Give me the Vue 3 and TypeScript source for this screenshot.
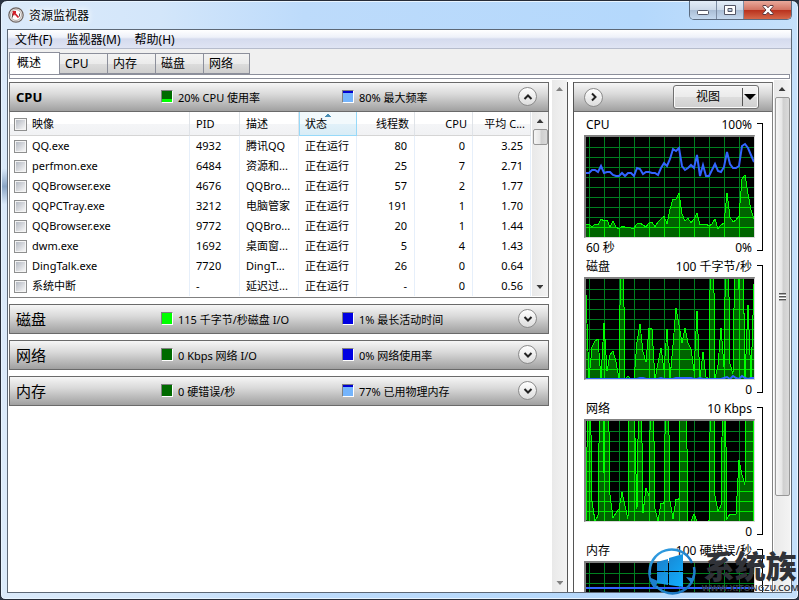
<script setup lang="ts">
import { ref } from 'vue'

interface Proc {
  name: string
  pid: string
  desc: string
  threads: string
  cpu: string
  avg: string
}

interface Section {
  title: string
  leftIcon: string
  left: string
  rightIcon: string
  right: string
}

interface Chart {
  id: string
  title: string
  max: string
  span: string
  min: string
  area: number[]
  line: number[]
}

const menus = ['文件(F)', '监视器(M)', '帮助(H)']
const tabs = ['概述', 'CPU', '内存', '磁盘', '网络']
const activeTab = ref('概述')

const procs: Proc[] = [
  { name: 'QQ.exe', pid: '4932', desc: '腾讯QQ', threads: '80', cpu: '0', avg: '3.25' },
  { name: 'perfmon.exe', pid: '6484', desc: '资源和...', threads: '25', cpu: '7', avg: '2.71' },
  { name: 'QQBrowser.exe', pid: '4676', desc: 'QQBro...', threads: '57', cpu: '2', avg: '1.77' },
  { name: 'QQPCTray.exe', pid: '3212', desc: '电脑管家', threads: '191', cpu: '1', avg: '1.70' },
  { name: 'QQBrowser.exe', pid: '9772', desc: 'QQBro...', threads: '20', cpu: '1', avg: '1.44' },
  { name: 'dwm.exe', pid: '1692', desc: '桌面窗...', threads: '5', cpu: '4', avg: '1.43' },
  { name: 'DingTalk.exe', pid: '7720', desc: 'DingT...', threads: '26', cpu: '0', avg: '0.64' },
  { name: '系统中断', pid: '-', desc: '延迟过...', threads: '-', cpu: '0', avg: '0.56' },
]

const sections: Section[] = [
  { title: 'CPU', leftIcon: 'green-low', left: '20% CPU 使用率', rightIcon: 'blue-high', right: '80% 最大频率' },
  { title: '磁盘', leftIcon: 'green-full', left: '115 千字节/秒磁盘 I/O', rightIcon: 'blue-empty', right: '1% 最长活动时间' },
  { title: '网络', leftIcon: 'green-empty', left: '0 Kbps 网络 I/O', rightIcon: 'blue-empty', right: '0% 网络使用率' },
  { title: '内存', leftIcon: 'green-empty', left: '0 硬错误/秒', rightIcon: 'blue-high', right: '77% 已用物理内存' },
]

const charts: Chart[] = [
  {
    id: 'cpu', title: 'CPU', max: '100%', span: '60 秒', min: '0%',
    area: [13, 13, 10, 13, 12, 18, 16, 17, 10, 16, 10, 8, 11, 10, 10, 9, 9, 13, 14, 12, 10, 14, 15, 10, 15, 18, 21, 13, 28, 38, 38, 44, 23, 16, 19, 14, 18, 24, 12, 13, 13, 11, 13, 18, 8, 12, 14, 44, 20, 15, 17, 21, 58, 62, 43, 27, 18],
    line: [64, 64, 67, 67, 65, 71, 64, 65, 65, 62, 61, 61, 64, 61, 64, 64, 61, 69, 68, 63, 65, 65, 64, 64, 62, 69, 74, 71, 78, 88, 86, 89, 71, 67, 69, 72, 69, 82, 61, 72, 61, 61, 67, 73, 66, 65, 70, 85, 73, 69, 69, 71, 91, 93, 89, 82, 75],
  },
  {
    id: 'disk', title: '磁盘', max: '100 千字节/秒', span: '', min: '0',
    area: [84, 0, 32, 38, 40, 0, 56, 8, 24, 28, 17, 0, 220, 0, 3, 0, 0, 37, 55, 27, 17, 51, 50, 0, 16, 31, 9, 50, 0, 34, 71, 54, 36, 51, 36, 30, 8, 68, 0, 27, 2, 0, 260, 0, 14, 51, 12, 220, 15, 5, 200, 90, 200, 0, 74, 0, 95],
    line: [0, 0, 0, 0, 0, 0, 0, 0, 0, 0, 0, 0, 0, 0, 0, 0, 0, 0, 1, 1, 0, 0, 0, 0, 0, 1, 0, 0, 0, 0, 1, 1, 1, 1, 1, 1, 0, 0, 1, 0, 0, 0, 0, 0, 0, 0, 1, 2, 0, 3, 1, 0, 3, 1, 0, 1, 1],
  },
  {
    id: 'net', title: '网络', max: '10 Kbps', span: '', min: '0',
    area: [0, 220, 20, 0, 5, 220, 48, 220, 26, 3, 8, 12, 29, 15, 2, 400, 120, 12, 220, 8, 33, 25, 220, 12, 0, 18, 18, 220, 20, 2, 22, 22, 400, 220, 0, 0, 7, 0, 0, 0, 0, 0, 260, 25, 10, 15, 220, 2, 7, 7, 7, 61, 46, 36, 400, 400, 0],
    line: [],
  },
  {
    id: 'mem', title: '内存', max: '100 硬错误/秒', span: '', min: '0',
    area: [],
    line: Array.from({ length: 57 }, () => 75),
  },
]

const linePoints = (v: number[]): string => v.map((y, i) => `${i * 3},${100 - y}`).join(' ')
const areaPoints = (v: number[]): string => `-2,102 ${linePoints(v)} 170,102`
const vLines = Array.from({ length: 12 }, (_, i) => 3 + i * 15)
const hLines = Array.from({ length: 9 }, (_, i) => 10 + i * 10)
const gridPath = [...vLines.map((x) => `M${x}.5 0V101`), ...hLines.map((y) => `M0 ${y}.5H169`)].join('')
</script>

<template>
  <div class="window">
    <header class="titlebar">
      <svg class="app-icon" viewBox="0 0 16 16" aria-hidden="true">
        <circle cx="8" cy="8" r="7.2" fill="#e9e6e4" stroke="#6c6360" stroke-width="1.2" />
        <circle cx="8" cy="8" r="5.4" fill="#fff" stroke="#a39c99" stroke-width=".8" />
        <path d="M4.500 10.500V6.500M11.500 9.500V6.500" stroke="#555" stroke-width="1" />
        <path d="M5.500 5l5 5.500M5.500 8.500V5h2.500" stroke="#d2202a" stroke-width="1.800" fill="none" />
      </svg>
      <h1>资源监视器</h1>
      <div class="caption-buttons">
        <button type="button" aria-label="最小化">
          <svg width="14" height="12"><rect x="1.5" y="6.5" width="11" height="4" rx="1" fill="#fff" stroke="#535666" /></svg>
        </button>
        <button type="button" aria-label="最大化">
          <svg width="14" height="12"><path d="M1.500 1.500h11v9h-11zM5 4.500h4v3h-4z" fill="#fff" fill-rule="evenodd" stroke="#535666" /></svg>
        </button>
        <button type="button" class="close" aria-label="关闭">
          <svg width="14" height="12" viewBox="0 0 14 12">
            <path d="M2 1.500h3l2 2.300 2-2.300h3v1.200L9 6l3 3.300v1.200H9L7 8.200 5 10.500H2V9.300L5 6 2 2.700z" fill="#fff" stroke="#5b3b41" />
          </svg>
        </button>
      </div>
    </header>

    <div class="client">
      <nav class="menubar">
        <button v-for="m in menus" :key="m" type="button">{{ m }}</button>
      </nav>
      <div class="tabs" role="tablist">
        <button
          v-for="t in tabs" :key="t" type="button" role="tab"
          :aria-selected="t === activeTab" :class="{ active: t === activeTab }" @click="activeTab = t"
        >{{ t }}</button>
      </div>
      <div class="tab-edge"></div>

      <main class="panes">
        <div class="left">
          <section v-for="(s, i) in sections" :key="s.title" class="section">
            <div class="bar">
              <h2 :class="{ latin: i === 0 }">{{ s.title }}</h2>
              <span class="stat"><i class="meter" :class="s.leftIcon"></i>{{ s.left }}</span>
              <span class="stat"><i class="meter" :class="s.rightIcon"></i>{{ s.right }}</span>
              <button type="button" class="round" :aria-label="s.title">
                <svg width="12" height="12" viewBox="0 0 12 12">
                  <path :d="i === 0 ? 'M2.500 8L6 4.500 9.500 8' : 'M2.500 4L6 7.500 9.500 4'" />
                </svg>
              </button>
            </div>
            <div v-if="i === 0" class="grid-body">
              <table>
                <colgroup>
                  <col />
                  <col class="c-pid" />
                  <col class="c-desc" />
                  <col class="c-num" /><col class="c-num" /><col class="c-num" /><col class="c-num" />
                </colgroup>
                <thead>
                  <tr>
                    <th><label><input type="checkbox" />映像</label></th>
                    <th>PID</th>
                    <th>描述</th>
                    <th class="sorted">状态</th>
                    <th class="num">线程数</th>
                    <th class="num">CPU</th>
                    <th class="num">平均 C...</th>
                  </tr>
                </thead>
                <tbody>
                  <tr v-for="p in procs" :key="p.pid">
                    <td><label><input type="checkbox" />{{ p.name }}</label></td>
                    <td>{{ p.pid }}</td>
                    <td>{{ p.desc }}</td>
                    <td>正在运行</td>
                    <td class="num">{{ p.threads }}</td>
                    <td class="num">{{ p.cpu }}</td>
                    <td class="num">{{ p.avg }}</td>
                  </tr>
                </tbody>
              </table>
              <div class="scroll">
                <i class="arrow up"></i>
                <i class="thumb small"></i>
                <i class="arrow down"></i>
              </div>
            </div>
          </section>
        </div>
        <div class="scroll wide dim"><i class="arrow up"></i><i class="arrow down"></i></div>
        <div class="splitter"></div>

        <aside class="right">
          <div class="bar chart-bar">
            <button type="button" class="round" aria-label="隐藏图表">
              <svg width="12" height="12" viewBox="0 0 12 12"><path d="M4 2.500L7.500 6 4 9.500" /></svg>
            </button>
            <div class="view">
              <button type="button" class="view-main">视图</button>
              <button type="button" class="view-drop" aria-label="视图选项">
                <svg width="12" height="6"><path d="M0 0h12L6 6z" /></svg>
              </button>
            </div>
          </div>
          <div class="charts">
            <figure v-for="c in charts" :key="c.id">
              <div class="plot">
                <div class="cap"><span>{{ c.title }}</span><span>{{ c.max }}</span></div>
                <svg class="graph" viewBox="0 0 168 100" preserveAspectRatio="none">
                  <defs>
                    <clipPath :id="'clip-' + c.id"><polygon :points="areaPoints(c.area)" /></clipPath>
                  </defs>
                  <path :d="gridPath" class="grid" />
                  <template v-if="c.area.length">
                    <polygon :points="areaPoints(c.area)" class="area" />
                    <path :d="gridPath" class="grid lit" :clip-path="`url(#clip-${c.id})`" />
                    <polyline :points="linePoints(c.area)" class="edge" />
                  </template>
                  <polyline v-if="c.line.length" :points="linePoints(c.line)" class="trend" />
                </svg>
                <div class="foot"><span>{{ c.span }}</span><span>{{ c.min }}</span></div>
              </div>
              <div class="bracket"></div>
            </figure>
          </div>
        </aside>
        <div class="scroll outer">
          <i class="arrow up"></i>
          <i class="thumb tall"><b></b></i>
        </div>
      </main>
    </div>

    <div class="watermark">
      <svg class="mark" viewBox="0 0 50 52" aria-hidden="true">
        <defs>
          <linearGradient id="ring" x1="0" y1="0" x2="1" y2="1">
            <stop offset="0" stop-color="#35a5e8" />
            <stop offset="1" stop-color="#1268b5" />
          </linearGradient>
          <linearGradient id="flag" x1="0" y1="0" x2="1" y2="1">
            <stop offset="0" stop-color="#1c7cc8" />
            <stop offset="1" stop-color="#10b0ff" />
          </linearGradient>
        </defs>
        <path d="M3 30A22 22 0 0 1 45 18" fill="none" stroke="url(#ring)" stroke-width="2.500" />
        <path d="M47 22A22 22 0 0 1 9 41" fill="none" stroke="url(#ring)" stroke-width="2.500" />
        <path d="M2 24l2 9 7 3-3 8C3 39 0 31 2 24zM48 30l-3 9-6-7 6 1 3-11z" fill="#1c7fcc" />
        <path d="M10 17l11-3v12H10zM22 13l14-4v17H22zM10 27h11v13l-11-2zM22 27h14v15l-14-2z" fill="url(#flag)" />
      </svg>
      <div class="words">
        <strong>系统族</strong>
        <span>WWW.XITONGZU.COM</span>
      </div>
    </div>
  </div>
</template>

<style>
body {
  margin: 0;
  background: #2b3442;
}
</style>

<style scoped>
* {
  box-sizing: border-box;
}
.window {
  position: relative;
  display: flex;
  flex-direction: column;
  height: 100vh;
  padding: 0 6px 6px;
  overflow: hidden;
  border: 1px solid #262c38;
  border-radius: 7px 7px 5px 5px;
  background:
    linear-gradient(180deg, transparent 0, transparent 28%, #8aa5c5 31%, transparent 34%) left / 6px 100% no-repeat,
    linear-gradient(90deg, #dbeafa 0, #d3e6fa 20%, #bddbfb 38%, #b4d8fc 80%, #c5e0fb 100%);
  box-shadow: inset 0 0 0 1px #e8f4ff;
  color: #000;
  font-family: "Noto Sans", "Noto Sans CJK SC", sans-serif;
  font-size: 12px;
}
button {
  margin: 0;
  padding: 0;
  border: 0;
  background: none;
  color: inherit;
  font: inherit;
}
.titlebar {
  display: flex;
  flex: none;
  height: 28px;
  align-items: center;
  padding-left: 1px;
}
.app-icon {
  width: 16px;
  height: 16px;
}
h1 {
  margin: 0 auto 0 5px;
  font-size: 12px;
  font-weight: 400;
  text-shadow: 0 0 6px #fff, 0 0 8px #fff;
}
.caption-buttons {
  display: flex;
  align-self: flex-start;
  height: 19px;
  overflow: hidden;
  border: 1px solid #5b6b80;
  border-top: 0;
  border-radius: 0 0 5px 5px;
}
.caption-buttons button {
  display: flex;
  width: 27px;
  align-items: center;
  justify-content: center;
  border-right: 1px solid #7c8ca3;
  background: linear-gradient(#e3edf8 0, #ccd9e9 48%, #a9bdd5 50%, #c4d8ee 100%);
}
.caption-buttons .close {
  width: 47px;
  border-right: 0;
  background: linear-gradient(#e9a99b 0, #d27463 48%, #b8301c 50%, #d5684a 100%);
}
.client {
  display: flex;
  flex: 1;
  flex-direction: column;
  min-height: 0;
  border: 1px solid #5d6876;
  background: #fff;
}
.menubar {
  display: flex;
  flex: none;
  gap: 14px;
  height: 19px;
  padding-left: 7px;
  border-bottom: 1px solid #b6bccc;
  background: linear-gradient(#fff 0, #eef1f9 40%, #d5dbee 50%, #dfe4f3 100%);
}
.menubar button {
  line-height: 19px;
}
.tabs {
  display: flex;
  flex: none;
  align-items: flex-end;
  height: 25px;
  padding: 3px 1px 0;
  background: #f0f0f0;
}
.tabs button {
  width: 48px;
  height: 21px;
  padding-left: 5px;
  border: 1px solid #8c8f9b;
  border-left-width: 0;
  background: linear-gradient(#f3f3f3 0, #ebebeb 50%, #dcdcdc 52%, #cfcfcf 100%);
  line-height: 20px;
  text-align: left;
}
.tabs button:last-child {
  width: 46px;
}
.tabs button.active {
  width: 51px;
  height: 22px;
  padding: 0 0 1px 7px;
  border-width: 1px 1px 0;
  background: #fff;
}
.tab-edge {
  flex: none;
  height: 5px;
  margin: 0 1px 1px;
  border: 1px solid #8c8f9b;
  background: #fff;
}
.panes {
  display: flex;
  flex: 1;
  min-height: 0;
  padding-right: 1px;
}
.left {
  display: flex;
  flex: 1;
  flex-direction: column;
  gap: 6px;
  min-width: 0;
  padding: 2px 3px 0 1px;
}
.bar {
  display: grid;
  grid-template-columns: 145px 181px 1fr auto;
  align-items: center;
  height: 30px;
  padding: 0 11px 1px 6px;
  border: 1px solid #6a6a6a;
  background: linear-gradient(#f6f6f6 0, #d9d9d9 40%, #a0a0a0 100%);
}
h2 {
  margin: 0;
  font-size: 15px;
  font-weight: 400;
  line-height: 20px;
}
h2.latin {
  font-size: 13px;
  font-weight: 700;
}
.stat {
  display: flex;
  align-items: center;
  gap: 5px;
  font-size: 11px;
  white-space: nowrap;
}
.meter {
  width: 12px;
  height: 13px;
  border: 1px solid;
  border-color: #808080 #fff #fff #808080;
}
.green-full {
  background: #0f0;
}
.green-empty {
  background: radial-gradient(#004000 30%, #008000 60%) 0 0 / 2px 2px;
}
.green-low {
  background: linear-gradient(transparent 8px, #0f0 8px), radial-gradient(#004000 30%, #008000 60%) 0 0 / 2px 2px;
}
.blue-empty {
  background: radial-gradient(#0000a8 30%, #00f 60%) 0 0 / 2px 2px;
}
.blue-high {
  background: linear-gradient(#0000d0 2px, #74b4fc 2px);
}
.round {
  display: flex;
  width: 19px;
  height: 19px;
  align-items: center;
  justify-content: center;
  border: 1px solid #8b8b8b;
  border-radius: 50%;
  background: linear-gradient(#fff, #dcdcdc);
}
.round path {
  fill: none;
  stroke: #222;
  stroke-width: 2;
}
.grid-body {
  display: flex;
  gap: 1px;
  padding-bottom: 1px;
  border: 1px solid #808080;
  border-top: 0;
}
table {
  flex: 1;
  width: 0;
  min-width: 0;
  border-collapse: separate;
  border-spacing: 0;
  table-layout: fixed;
  font-size: 11px;
}
.c-pid {
  width: 50px;
}
.c-desc {
  width: 59px;
}
.c-num {
  width: 58px;
}
th,
td {
  height: 20px;
  padding: 0 6px;
  overflow: hidden;
  border-right: 1px solid #e6effa;
  font-weight: 400;
  line-height: 20px;
  text-align: left;
  white-space: nowrap;
}
th {
  height: 24px;
  padding-top: 1px;
  border-right-color: #dfe3e8;
  border-bottom: 1px solid #d5d5d5;
  background: linear-gradient(#fff 50%, #f4f5f7 52%, #f1f2f4);
}
th:first-child,
td:first-child {
  padding-left: 4px;
}
th.sorted {
  border-right-color: #96d9f9;
  border-bottom-color: #96d9f9;
  border-left: 1px solid #96d9f9;
  padding-left: 5px;
  background:
    conic-gradient(from 135deg at 50% 0, #4a8fb5 90deg, transparent 0) center 1px / 8px 4px no-repeat,
    linear-gradient(#f2f9fc 50%, #e1f1f9 52%, #d8ecf6);
}
.num {
  padding-right: 7px;
  text-align: right;
}
th.num {
  padding-right: 5px;
}
label {
  display: flex;
  align-items: center;
  gap: 5px;
}
input {
  width: 13px;
  height: 13px;
  margin: 0;
  appearance: none;
  border: 1px solid #8e8f8f;
  background: linear-gradient(135deg, #b4b9c2, #f6f6f6) center / 9px 9px no-repeat #f4f4f4;
}
.scroll {
  display: flex;
  flex: none;
  flex-direction: column;
  align-items: center;
  width: 16px;
  background: linear-gradient(90deg, #e9e9e9, #f3f3f3);
}
.scroll.wide {
  width: 15px;
}
.arrow {
  flex: none;
  width: 16px;
  height: 17px;
}
.arrow.down {
  margin-top: auto;
  transform: rotate(180deg);
}
.arrow::before {
  display: block;
  width: 7px;
  height: 4px;
  margin: 7px auto 0;
  background: #3a3a3a;
  clip-path: polygon(50% 0, 100% 100%, 0 100%);
  content: "";
}
.dim .arrow {
  opacity: 0.6;
}
.thumb {
  display: flex;
  flex: none;
  width: 15px;
  align-items: center;
  justify-content: center;
  border: 1px solid #979797;
  border-radius: 2px;
  background: linear-gradient(90deg, #f5f5f5 0, #e6e6e6 45%, #cfcfcf 55%, #dadada 100%);
}
.thumb.small {
  height: 16px;
}
.thumb.tall {
  height: 78%;
}
.thumb b {
  width: 7px;
  height: 8px;
  background: repeating-linear-gradient(#555 0, #555 1px, #aaa 1px, #aaa 2px, #fff 2px, #fff 3px);
}
.splitter {
  flex: none;
  width: 7px;
  margin-top: 2px;
  border: 1px solid #555;
  border-top: 0;
  border-bottom: 0;
  background: #fff;
}
.right {
  flex: none;
  width: 199px;
  margin-top: 2px;
  overflow: hidden;
  border-right: 1px solid #808080;
}
.chart-bar {
  display: flex;
  justify-content: space-between;
  padding: 0 13px 0 10px;
  border-right: 0;
  border-left: 0;
}
.view {
  display: flex;
  width: 86px;
  height: 24px;
  align-items: center;
  border: 1px solid #707070;
  border-radius: 3px;
  background: linear-gradient(#f5f5f5 0, #ebebeb 48%, #ddd 50%, #cfcfcf 100%);
  box-shadow: inset 0 0 0 1px #fafafa;
}
.view-main {
  flex: 1;
  line-height: 20px;
}
.view-drop {
  display: flex;
  height: 18px;
  padding: 0 2px 0 1px;
  align-items: center;
  border-left: 1px solid #555;
}
.charts {
  padding: 4px 9px 0 10px;
}
figure {
  display: flex;
  height: 142px;
  margin: 0;
  gap: 2px;
}
.plot {
  flex: 1;
}
.cap,
.foot {
  display: flex;
  justify-content: space-between;
  padding: 0 3px 0 2px;
  white-space: nowrap;
}
.cap {
  height: 19px;
  line-height: 18px;
}
.foot {
  height: 19px;
  line-height: 19px;
}
.graph {
  display: block;
  width: 100%;
  height: 103px;
  border: 2px solid;
  border-color: #808080 #d8d8d8 #d8d8d8 #808080;
  border-width: 2px 1px 1px 2px;
  background: #000;
  shape-rendering: crispEdges;
}
.grid {
  fill: none;
  stroke: #008020;
  stroke-width: 1;
}
.grid.lit {
  stroke: #00e600;
}
.area {
  fill: #006400;
}
.edge {
  fill: none;
  stroke: #0f0;
  stroke-width: 1;
}
.trend {
  fill: none;
  stroke: #3264ff;
  stroke-width: 2;
  shape-rendering: auto;
}
.bracket {
  width: 6px;
  height: 128px;
  margin-top: 7px;
  border: 1px solid #000;
  border-left: 0;
}
.outer {
  margin-left: 1px;
}
.watermark {
  position: absolute;
  right: -1px;
  bottom: 2px;
  display: flex;
  align-items: center;
  gap: 5px;
}
.mark {
  width: 50px;
  height: 52px;
}
.words {
  display: flex;
  flex-direction: column;
  align-items: center;
}
.words strong {
  color: #303238;
  font-size: 31px;
  font-weight: 900;
  line-height: 34px;
}
.words span {
  color: #3c3e44;
  font-size: 9px;
  font-weight: 600;
  line-height: 10px;
}
</style>
